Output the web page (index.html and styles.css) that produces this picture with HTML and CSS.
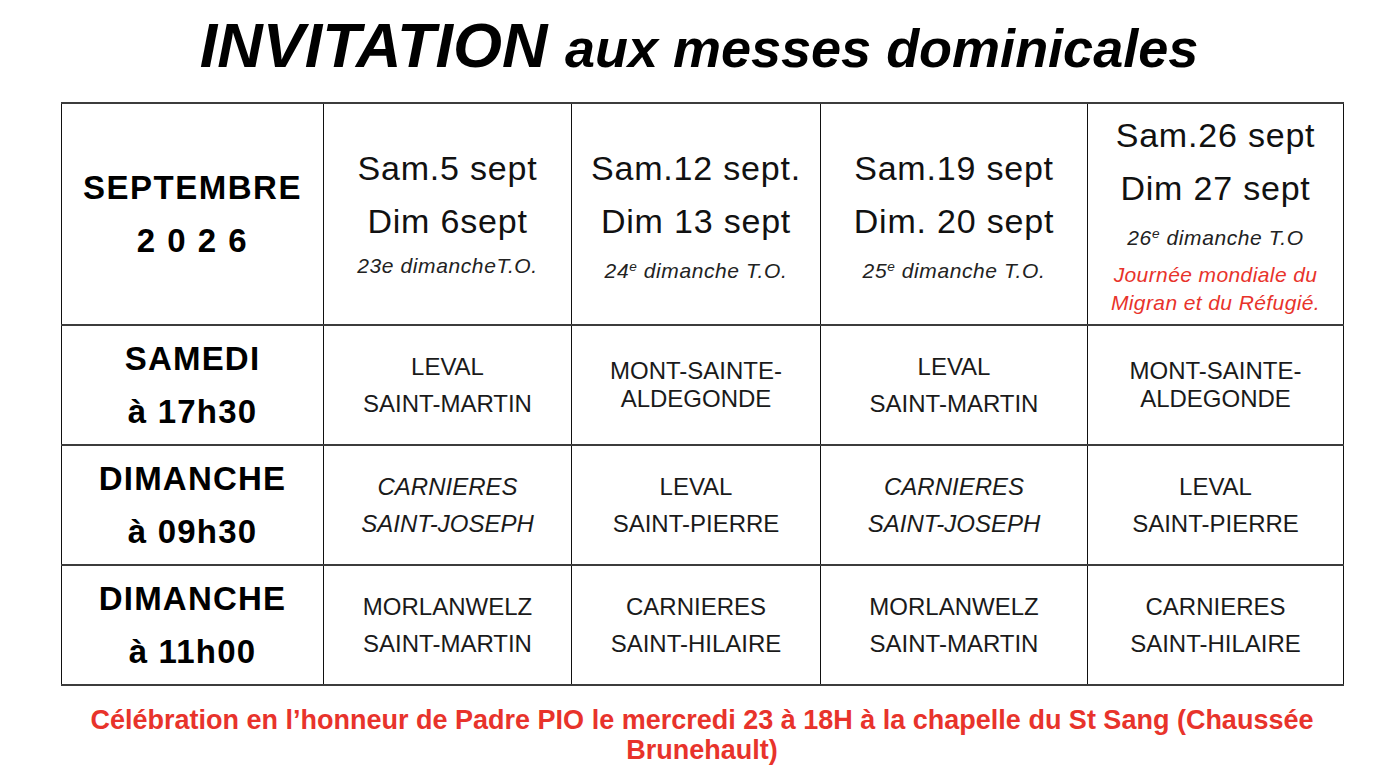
FILE: index.html
```html
<!DOCTYPE html>
<html lang="fr">
<head>
<meta charset="utf-8">
<title>Invitation aux messes dominicales</title>
<link rel="stylesheet" href="styles.css">
</head>
<body>
<div class="page">
  <h1 class="title"><span class="title-big">INVITATION </span><span class="title-small">aux messes dominicales</span></h1>

  <table class="schedule">
    <colgroup>
      <col class="c1"><col class="c2"><col class="c3"><col class="c4"><col class="c5">
    </colgroup>
    <tr class="row-head">
      <td class="label">
        <div class="label-line">SEPTEMBRE</div>
        <div class="label-line year">2 0 2 6</div>
      </td>
      <td class="date">
        <div class="big">Sam.5 sept</div>
        <div class="big">Dim 6sept</div>
        <div class="small tight">23e dimancheT.O.</div>
      </td>
      <td class="date">
        <div class="big">Sam.12 sept.</div>
        <div class="big">Dim 13 sept</div>
        <div class="small">24<sup>e</sup> dimanche T.O.</div>
      </td>
      <td class="date">
        <div class="big">Sam.19 sept</div>
        <div class="big">Dim. 20 sept</div>
        <div class="small">25<sup>e</sup> dimanche T.O.</div>
      </td>
      <td class="date date-high">
        <div class="big">Sam.26 sept</div>
        <div class="big">Dim 27 sept</div>
        <div class="small">26<sup>e</sup> dimanche T.O</div>
        <div class="note">Journée mondiale du<br>Migran et du Réfugié.</div>
      </td>
    </tr>
    <tr class="row-body">
      <td class="label">
        <div class="label-line">SAMEDI</div>
        <div class="label-line">à 17h30</div>
      </td>
      <td class="place"><div class="pl">LEVAL</div><div class="pl">SAINT-MARTIN</div></td>
      <td class="place"><div class="pl-wrap">MONT-SAINTE-<br>ALDEGONDE</div></td>
      <td class="place"><div class="pl">LEVAL</div><div class="pl">SAINT-MARTIN</div></td>
      <td class="place"><div class="pl-wrap">MONT-SAINTE-<br>ALDEGONDE</div></td>
    </tr>
    <tr class="row-body">
      <td class="label">
        <div class="label-line">DIMANCHE</div>
        <div class="label-line">à 09h30</div>
      </td>
      <td class="place italic"><div class="pl">CARNIERES</div><div class="pl">SAINT-JOSEPH</div></td>
      <td class="place"><div class="pl">LEVAL</div><div class="pl">SAINT-PIERRE</div></td>
      <td class="place italic"><div class="pl">CARNIERES</div><div class="pl">SAINT-JOSEPH</div></td>
      <td class="place"><div class="pl">LEVAL</div><div class="pl">SAINT-PIERRE</div></td>
    </tr>
    <tr class="row-body">
      <td class="label">
        <div class="label-line">DIMANCHE</div>
        <div class="label-line">à 11h00</div>
      </td>
      <td class="place"><div class="pl">MORLANWELZ</div><div class="pl">SAINT-MARTIN</div></td>
      <td class="place"><div class="pl">CARNIERES</div><div class="pl">SAINT-HILAIRE</div></td>
      <td class="place"><div class="pl">MORLANWELZ</div><div class="pl">SAINT-MARTIN</div></td>
      <td class="place"><div class="pl">CARNIERES</div><div class="pl">SAINT-HILAIRE</div></td>
    </tr>
  </table>

  <p class="footer">Célébration en l’honneur de Padre PIO le mercredi 23 à 18H à la chapelle du St Sang (Chaussée Brunehault)</p>
</div>
</body>
</html>
```

FILE: styles.css
```css
html, body {
  margin: 0;
  padding: 0;
  background: #ffffff;
}

body {
  font-family: "Liberation Sans", Arial, sans-serif;
  color: #111111;
}

.page {
  width: 1398px;
  height: 770px;
  overflow: hidden;
}

.title {
  margin: 14px 0 0;
  height: 88px;
  font-size: 63px;
  line-height: 63px;
  font-weight: bold;
  font-style: italic;
  text-align: center;
  color: #000000;
  white-space: nowrap;
}

.title-small {
  font-size: 54px;
}

.schedule {
  margin-left: 61px;
  width: 1282px;
  table-layout: fixed;
  border-collapse: collapse;
}

.c1 { width: 262px; }
.c2 { width: 248px; }
.c3 { width: 249px; }
.c4 { width: 267px; }
.c5 { width: 256px; }

.schedule td {
  box-sizing: border-box;
  border-left: 1px solid #111111;
  border-right: 1px solid #111111;
  border-top: 2px solid #3c3c3c;
  border-bottom: 2px solid #3c3c3c;
  padding: 0;
  text-align: center;
  vertical-align: middle;
}

.row-head {
  height: 222px;
}

.row-body {
  height: 120px;
}

.label-line {
  font-size: 33px;
  line-height: 53px;
  font-weight: bold;
  color: #000000;
  letter-spacing: 1.2px;
}

.row-head .label-line {
  letter-spacing: 1.5px;
}

.schedule td.date {
  vertical-align: top;
  padding-top: 38px;
}

.schedule td.date-high {
  padding-top: 5px;
}

.big {
  font-size: 34px;
  line-height: 53px;
  color: #111111;
  letter-spacing: 0.8px;
}

.small {
  font-size: 21px;
  line-height: 46px;
  font-style: italic;
  color: #222222;
  letter-spacing: 0.6px;
}

.small.tight {
  line-height: 36px;
}

.small sup {
  font-size: 0.65em;
  line-height: 0;
  vertical-align: 0.5em;
}

.note {
  font-size: 21px;
  line-height: 28px;
  font-style: italic;
  color: #e8332b;
  letter-spacing: 0.4px;
}

.place {
  font-size: 24px;
  color: #1a1a1a;
}

.pl {
  line-height: 37px;
}

.pl-wrap {
  line-height: 28px;
}

.italic {
  font-style: italic;
}

.footer {
  width: 1282px;
  margin: 19px 0 0 61px;
  font-size: 27px;
  line-height: 30px;
  font-weight: bold;
  text-align: center;
  color: #e8332b;
}
```
